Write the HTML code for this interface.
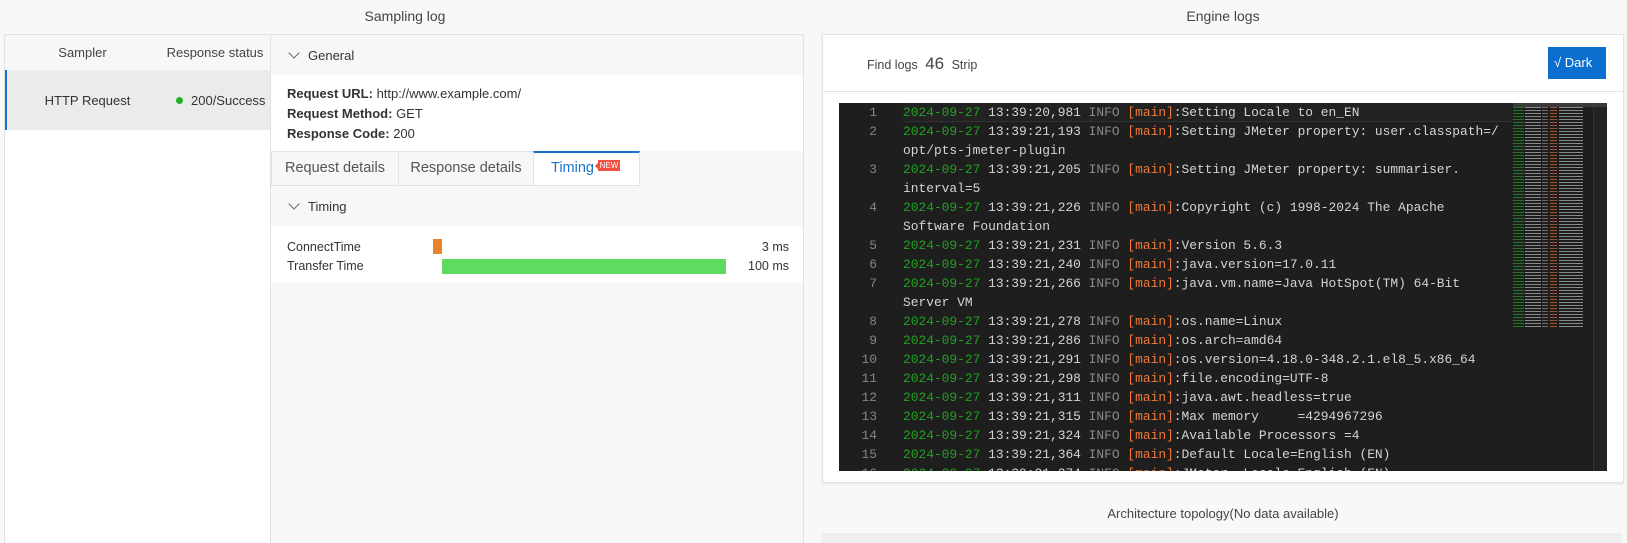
<!DOCTYPE html>
<html style="overflow:hidden;height:543px"><head><meta charset="utf-8"><style>
*{box-sizing:border-box;margin:0;padding:0}
body{width:1627px;height:543px;overflow:hidden;background:#f8f8f8;font-family:"Liberation Sans",sans-serif;color:#333;position:relative}
.abs{position:absolute}
.t{font-size:13px;white-space:nowrap}
.log{position:absolute;left:839px;top:103px;width:768px;height:368px;background:#1e1e1e;overflow:hidden;font-family:"Liberation Mono",monospace;font-size:12.9px}
.ln{position:absolute;height:19px;line-height:19px;white-space:pre;color:#d4d4d4}
.n{position:absolute;left:0;width:38px;text-align:right;color:#858585}
.x{position:absolute;left:64px}
.g{color:#22a022}.i{color:#8a8a8a}.o{color:#f07a3a}
.chev{display:inline-block;width:8px;height:8px;border-right:1.3px solid #666;border-bottom:1.3px solid #666;transform:rotate(45deg);margin-right:10px;position:relative;top:-3px}
.mm{position:absolute;background:repeating-linear-gradient(#0000 0 1px,#1e1e1e 1px 3px)}
</style></head><body>
<div class="abs t" style="left:0;width:810px;top:8px;text-align:center;font-size:14px;color:#444">Sampling log</div>
<div class="abs t" style="left:822px;width:802px;top:8px;text-align:center;font-size:14px;color:#444">Engine logs</div>

<div class="abs" style="left:4px;top:34px;width:800px;height:509px;border:1px solid #e2e2e2;border-bottom:none;background:#fff"></div>
<div class="abs" style="left:5px;top:35px;width:265px;height:35px;background:#f7f7f7"></div>
<div class="abs t" style="left:5px;width:155px;top:45px;text-align:center;color:#444">Sampler</div>
<div class="abs t" style="left:160px;width:110px;top:45px;text-align:center;color:#444">Response status</div>
<div class="abs" style="left:5px;top:70px;width:265px;height:60px;background:#ebebeb;border-left:2px solid #1a73c9"></div>
<div class="abs t" style="left:5px;width:165px;top:93px;text-align:center;color:#333">HTTP Request</div>
<div class="abs" style="left:176px;top:97px;width:7px;height:7px;border-radius:50%;background:#22b022"></div>
<div class="abs t" style="left:191px;top:93px;color:#333">200/Success</div>
<div class="abs" style="left:270px;top:35px;width:1px;height:508px;background:#e2e2e2"></div>

<div class="abs" style="left:271px;top:35px;width:532px;height:508px;background:#f7f7f7"></div>
<div class="abs t" style="left:290px;top:48px"><span class="chev"></span>General</div>
<div class="abs" style="left:271px;top:75px;width:532px;height:76px;background:#fff"></div>
<div class="abs t" style="left:287px;top:86px"><b>Request URL:</b> http://www.example.com/</div>
<div class="abs t" style="left:287px;top:106px"><b>Request Method:</b> GET</div>
<div class="abs t" style="left:287px;top:126px"><b>Response Code:</b> 200</div>
<div class="abs" style="left:271px;top:151px;width:128px;height:35px;border:1px solid #e2e2e2;border-right:none;background:#f7f7f7"></div>
<div class="abs t" style="left:271px;width:128px;top:160px;text-align:center;font-size:14.5px;color:#555">Request details</div>
<div class="abs" style="left:398px;top:151px;width:136px;height:35px;border:1px solid #e2e2e2;background:#f7f7f7"></div>
<div class="abs t" style="left:398px;width:136px;top:160px;text-align:center;font-size:14.5px;color:#555">Response details</div>
<div class="abs" style="left:533px;top:151px;width:107px;height:35px;border:1px solid #e2e2e2;border-top:2px solid #1a73c9;background:#fff"></div>
<div class="abs t" style="left:551px;top:160px;font-size:14.5px;color:#1a73c9">Timing</div>
<div class="abs" style="left:598px;top:160px;width:22px;height:11px;background:#f05040;color:#fff;font-size:8px;line-height:11px;text-align:center">NEW</div>
<div class="abs" style="left:595px;top:163px;width:0;height:0;border:3px solid transparent;border-right-color:#f05040;border-left:none"></div>
<div class="abs t" style="left:290px;top:199px"><span class="chev"></span>Timing</div>
<div class="abs" style="left:271px;top:226px;width:532px;height:57px;background:#fff"></div>
<div class="abs t" style="left:287px;top:240px;font-size:12.5px">ConnectTime</div>
<div class="abs t" style="left:287px;top:259px;font-size:12.5px">Transfer Time</div>
<div class="abs" style="left:433px;top:239px;width:9px;height:15px;background:#e8842c"></div>
<div class="abs" style="left:442px;top:259px;width:284px;height:15px;background:#5fdb5f"></div>
<div class="abs t" style="left:700px;width:89px;top:240px;text-align:right;font-size:12.5px">3 ms</div>
<div class="abs t" style="left:700px;width:89px;top:259px;text-align:right;font-size:12.5px">100 ms</div>

<div class="abs" style="left:822px;top:34px;width:802px;height:449px;border:1px solid #e2e2e2;background:#fff;box-shadow:0 1px 3px rgba(0,0,0,.08)"></div>
<div class="abs" style="left:823px;top:91px;width:800px;height:1px;background:#e2e2e2"></div>
<div class="abs t" style="left:867px;top:54px;font-size:12.5px;color:#444">Find logs <span style="font-size:17px;margin:0 4px">46</span> Strip</div>
<div class="abs" style="left:1548px;top:47px;width:58px;height:32px;background:#0b6fd0;color:#fff;font-size:13px;line-height:32px;padding-left:6px">√ Dark</div>

<div class="log">
<div class="abs" style="left:64px;top:0;width:608px;height:19px;border-bottom:1px solid #333;background:#222"></div>
<div class="ln" style="top:0;width:100%"><span class="n">1</span><span class="x"><span class="g">2024-09-27</span> 13:39:20,981 <span class="i">INFO</span> <span class="o">[main]</span>:Setting Locale to en_EN</span></div>
<div class="ln" style="top:19px;width:100%"><span class="n">2</span><span class="x"><span class="g">2024-09-27</span> 13:39:21,193 <span class="i">INFO</span> <span class="o">[main]</span>:Setting JMeter property: user.classpath=/</span></div>
<div class="ln" style="top:38px;width:100%"><span class="x">opt/pts-jmeter-plugin</span></div>
<div class="ln" style="top:57px;width:100%"><span class="n">3</span><span class="x"><span class="g">2024-09-27</span> 13:39:21,205 <span class="i">INFO</span> <span class="o">[main]</span>:Setting JMeter property: summariser.</span></div>
<div class="ln" style="top:76px;width:100%"><span class="x">interval=5</span></div>
<div class="ln" style="top:95px;width:100%"><span class="n">4</span><span class="x"><span class="g">2024-09-27</span> 13:39:21,226 <span class="i">INFO</span> <span class="o">[main]</span>:Copyright (c) 1998-2024 The Apache</span></div>
<div class="ln" style="top:114px;width:100%"><span class="x">Software Foundation</span></div>
<div class="ln" style="top:133px;width:100%"><span class="n">5</span><span class="x"><span class="g">2024-09-27</span> 13:39:21,231 <span class="i">INFO</span> <span class="o">[main]</span>:Version 5.6.3</span></div>
<div class="ln" style="top:152px;width:100%"><span class="n">6</span><span class="x"><span class="g">2024-09-27</span> 13:39:21,240 <span class="i">INFO</span> <span class="o">[main]</span>:java.version=17.0.11</span></div>
<div class="ln" style="top:171px;width:100%"><span class="n">7</span><span class="x"><span class="g">2024-09-27</span> 13:39:21,266 <span class="i">INFO</span> <span class="o">[main]</span>:java.vm.name=Java HotSpot(TM) 64-Bit</span></div>
<div class="ln" style="top:190px;width:100%"><span class="x">Server VM</span></div>
<div class="ln" style="top:209px;width:100%"><span class="n">8</span><span class="x"><span class="g">2024-09-27</span> 13:39:21,278 <span class="i">INFO</span> <span class="o">[main]</span>:os.name=Linux</span></div>
<div class="ln" style="top:228px;width:100%"><span class="n">9</span><span class="x"><span class="g">2024-09-27</span> 13:39:21,286 <span class="i">INFO</span> <span class="o">[main]</span>:os.arch=amd64</span></div>
<div class="ln" style="top:247px;width:100%"><span class="n">10</span><span class="x"><span class="g">2024-09-27</span> 13:39:21,291 <span class="i">INFO</span> <span class="o">[main]</span>:os.version=4.18.0-348.2.1.el8_5.x86_64</span></div>
<div class="ln" style="top:266px;width:100%"><span class="n">11</span><span class="x"><span class="g">2024-09-27</span> 13:39:21,298 <span class="i">INFO</span> <span class="o">[main]</span>:file.encoding=UTF-8</span></div>
<div class="ln" style="top:285px;width:100%"><span class="n">12</span><span class="x"><span class="g">2024-09-27</span> 13:39:21,311 <span class="i">INFO</span> <span class="o">[main]</span>:java.awt.headless=true</span></div>
<div class="ln" style="top:304px;width:100%"><span class="n">13</span><span class="x"><span class="g">2024-09-27</span> 13:39:21,315 <span class="i">INFO</span> <span class="o">[main]</span>:Max memory     =4294967296</span></div>
<div class="ln" style="top:323px;width:100%"><span class="n">14</span><span class="x"><span class="g">2024-09-27</span> 13:39:21,324 <span class="i">INFO</span> <span class="o">[main]</span>:Available Processors =4</span></div>
<div class="ln" style="top:342px;width:100%"><span class="n">15</span><span class="x"><span class="g">2024-09-27</span> 13:39:21,364 <span class="i">INFO</span> <span class="o">[main]</span>:Default Locale=English (EN)</span></div>
<div class="ln" style="top:361px;width:100%"><span class="n">16</span><span class="x"><span class="g">2024-09-27</span> 13:39:21,374 <span class="i">INFO</span> <span class="o">[main]</span>:JMeter  Locale=English (EN)</span></div>
<div class="abs" style="left:754px;top:0;width:14px;height:368px;background:#232323;border-left:1px solid #333"></div>
<div class="abs" style="left:674px;top:0;width:94px;height:4px;background:#3a3a3a"></div>
<div class="mm" style="left:674px;top:4px;width:80px;height:222px;background:
 linear-gradient(90deg,#1e7a1e 0 11px,#1e1e1e 11px 12px,#8a8a8a 12px 28px,#1e1e1e 28px 29px,#6a6a6a 29px 35px,#1e1e1e 35px 37px,#a05530 37px 44px,#1e1e1e 44px 46px,#8a8a8a 46px 70px,#1e1e1e 70px)"></div>
<div class="mm" style="left:674px;top:4px;width:80px;height:222px"></div>
<div class="abs" style="left:674px;top:226px;width:80px;height:142px;background:#1e1e1e"></div>
</div>

<div class="abs t" style="left:822px;width:802px;top:506px;text-align:center;font-size:13px;color:#444">Architecture topology(No data available)</div>
<div class="abs" style="left:822px;top:533px;width:800px;height:10px;background:#eeeeee"></div>
</body></html>
